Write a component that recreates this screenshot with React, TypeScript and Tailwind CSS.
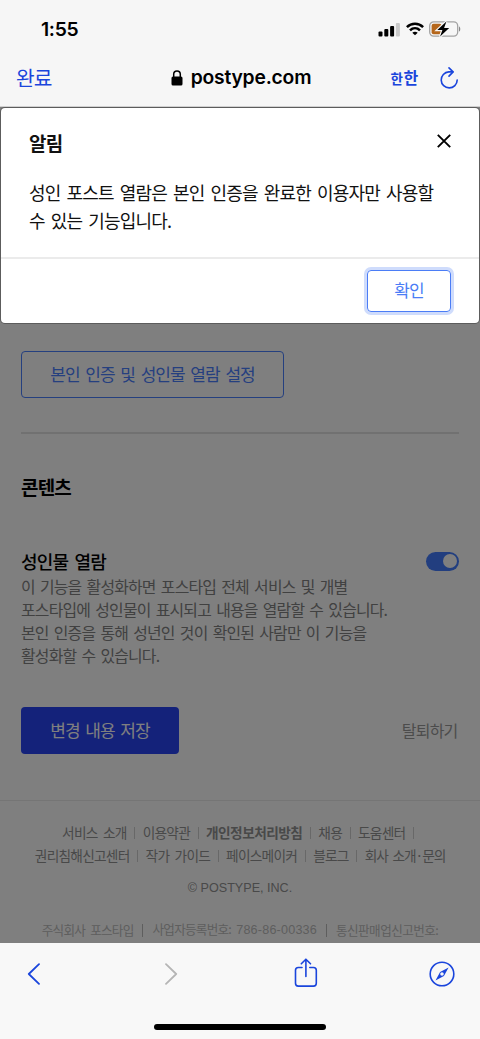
const footerLinks = [
  [
    { label: '서비스 소개' },
    { label: '이용약관' },
    { label: '개인정보처리방침', className: 'font-bold tracking-[-0.55px]' },
    { label: '채용' },
    { label: '도움센터', last: true },
  ],
  [
    { label: '권리침해신고센터' },
    { label: '작가 가이드' },
    { label: '페이스메이커' },
    { label: '블로그' },
    { label: '회사 소개·문의', className: 'tracking-[-1.1px]' },
  ],
];

function StatusBar() {
  return (
    <div className="flex h-[48px] items-end justify-between pr-[19px] pb-[9px] pl-[41px]">
      <span className="font-['Inter'] text-[19.3px] leading-[20px] font-semibold tracking-[-0.3px]">
        1:55
      </span>
      <div className="flex items-center gap-[5px] pb-[2px]">
        <svg width="23" height="15" viewBox="0 0 23 15">
          <rect x="0.5" y="9.5" width="4" height="5" rx="1" />
          <rect x="6.3" y="7" width="4" height="7.5" rx="1" />
          <rect x="12.1" y="4" width="4" height="10.5" rx="1" />
          <rect x="17.9" y="1" width="4" height="13.5" rx="1" fill="#c9c9c9" />
        </svg>
        <svg width="18" height="14" viewBox="0 0 18 14" fill="none" stroke="#000" strokeWidth="2.5">
          <path d="M.9 5.2C5.5.7 12.5.7 17.1 5.2" />
          <path d="M4 8.4c2.9-2.8 7.1-2.8 10 0" />
          <path d="M9 13.2 6.3 10.7c1.5-1.3 3.9-1.3 5.4 0Z" fill="#000" stroke="none" />
        </svg>
        <svg width="32" height="16" viewBox="0 0 32 16">
          <rect x="0.7" y="0.9" width="28" height="14.2" rx="4" fill="none" stroke="#a2a2a2" strokeWidth="1.3" />
          <path d="M30 5.4c1.7.6 1.7 4.6 0 5.2Z" fill="#888" />
          <rect x="2.6" y="2.8" width="10" height="10.4" rx="2" fill="#b5661b" />
          <path
            d="M17.4.6 8.3 9h5.1l-2.3 6.6L20.2 7h-5.1Z"
            stroke="#f6f6f6"
            strokeWidth="2.4"
            paintOrder="stroke"
          />
        </svg>
      </div>
    </div>
  );
}

function AddressBar() {
  return (
    <div className="grid h-[58px] grid-cols-[100px_1fr_100px] items-center pt-px">
      <button className="pb-[2px] pl-[16px] text-left text-[20.3px] leading-[28px] text-[#1a45dc]">
        완료
      </button>
      <div className="flex items-center justify-center gap-[8px] pl-[2px]">
        <svg width="12" height="16" viewBox="0 0 12 16">
          <rect x="0.5" y="6.5" width="11" height="9" rx="1.5" />
          <path d="M2.7 7V4.3a3.3 3.3 0 0 1 6.6 0V7" fill="none" stroke="#000" strokeWidth="1.5" />
        </svg>
        <span className="font-['Inter'] text-[19.3px] font-semibold tracking-[-0.2px] [word-spacing:0]">
          postype.com
        </span>
      </div>
      <div className="flex items-center justify-end gap-[21.5px] pr-[21px] text-[#1a45dc]">
        <span className="flex items-baseline gap-[1.5px] pb-[2px] font-bold">
          <span className="text-[13.5px] leading-[19px]">한</span>
          <span className="text-[16px] leading-[22px]">한</span>
        </span>
        <svg width="20" height="22" viewBox="0 0 20 22" fill="none" stroke="currentColor" strokeWidth="1.6" strokeLinecap="round" strokeLinejoin="round">
          <path d="M13.7 4.9H9.8A8 8 0 1 0 18.2 13" />
          <path d="m10 .9 4.1 4-4.1 4.2" />
        </svg>
      </div>
    </div>
  );
}

function AlertDialog() {
  return (
    <div
      role="dialog"
      className="absolute top-[1px] right-[1px] left-[1px] h-[215px] rounded-[4px] bg-white text-[#111] shadow-[0_0_0_1px_#5c5c5c]"
    >
      <div className="flex h-[64px] items-start justify-between pt-[21px] pr-[28px] pl-[28px]">
        <h2 className="text-[19px] leading-[28px] font-bold">알림</h2>
        <svg className="mt-[5px]" width="14" height="14" viewBox="0 0 14 14" fill="none" stroke="#000" strokeWidth="1.9">
          <path d="m.8.8 12.4 12.4M13.2.8.8 13.2" />
        </svg>
      </div>
      <p className="h-[87px] border-b-2 border-[#ebebeb] pt-[6px] pl-[28px] text-[18px] leading-[28px] whitespace-nowrap [word-spacing:2.75px]">
        성인 포스트 열람은 본인 인증을 완료한 이용자만 사용할
        <br />수 있는 기능입니다.
      </p>
      <div className="flex justify-end pt-[11px] pr-[28px]">
        <button className="h-[42px] w-[84px] rounded-[4px] border border-[#4b7df6] pb-[2px] text-[17px] text-[#4b7df6] shadow-[0_0_0_3px_#cfdcfc]">
          확인
        </button>
      </div>
    </div>
  );
}

function Settings() {
  return (
    <section className="px-[21px] pt-[244px]">
      <button className="block h-[47px] w-[263px] rounded-[4px] border border-[#4b80ff] pb-[2px] text-[17px] tracking-[-0.95px] text-[#4b80ff] [word-spacing:2.8px]">
        본인 인증 및 성인물 열람 설정
      </button>
      <hr className="mt-[34px] border-t-2 border-[#e2e2e2]" />
      <h3 className="mt-[39px] text-[19px] leading-[28px] font-bold">콘텐츠</h3>
      <div className="mt-[47px] flex h-[26px] items-center justify-between">
        <h4 className="text-[18px] leading-[26px] font-medium">성인물 열람</h4>
        <span className="flex h-[19px] w-[33px] items-center justify-end rounded-full bg-[#447dff] p-[2.5px]">
          <span className="size-[14px] rounded-full bg-white" />
        </span>
      </div>
      <p className="pt-[0.5px] text-[15.9px] leading-[23.3px] whitespace-nowrap text-[#828282] [word-spacing:2.4px]">
        이 기능을 활성화하면 포스타입 전체 서비스 및 개별
        <br />
        포스타입에 성인물이 표시되고 내용을 열람할 수 있습니다.
        <br />
        본인 인증을 통해 성년인 것이 확인된 사람만 이 기능을
        <br />
        활성화할 수 있습니다.
      </p>
      <div className="mt-[39.5px] flex items-center justify-between">
        <button className="h-[47px] w-[158px] rounded-[4px] bg-[#2844f5] pb-[2px] text-[17px] tracking-[-0.95px] text-white [word-spacing:2.8px]">
          변경 내용 저장
        </button>
        <span className="pr-[1.5px] pb-[2px] text-[16px] text-[#999]">탈퇴하기</span>
      </div>
    </section>
  );
}

function Footer() {
  return (
    <footer className="mt-[46px] flex flex-col items-center border-t border-[#ebebeb] pt-[20px] text-[13.7px] tracking-[-0.75px] whitespace-nowrap text-[#929292]">
      {footerLinks.map((row, i) => (
        <ul key={i} className="flex h-[23px] items-center gap-[7.5px] first:mr-[4px]">
          {row.map((item, j) => (
            <li key={item.label} className="flex items-center gap-[7.5px]">
              {j > 0 && <span className="h-[12px] w-px bg-[#d0d0d0]" />}
              <span className={item.className}>{item.label}</span>
              {item.last && <span className="h-[12px] w-px bg-[#d0d0d0]" />}
            </li>
          ))}
        </ul>
      ))}
      <p className="mt-[10px] font-['Liberation_Sans'] text-[12.6px] leading-[22px] tracking-normal [word-spacing:0]">
        © POSTYPE, INC.
      </p>
      <div className="mt-[19px] flex h-[24px] items-center gap-[9px] text-[12.6px] tracking-[-0.75px] text-[#bcbcbc]">
        <span>주식회사 포스타입</span>
        <span className="h-[13px] w-px bg-[#bcbcbc]" />
        <span>
          사업자등록번호:{' '}
          <span className="font-['Liberation_Sans'] tracking-[0.2px]">786-86-00336</span>
        </span>
        <span className="h-[13px] w-px bg-[#bcbcbc]" />
        <span className="tracking-[-0.55px]">통신판매업신고번호:</span>
      </div>
    </footer>
  );
}

function Toolbar() {
  return (
    <nav className="flex h-[96px] flex-col items-center justify-between bg-[#f8f8f8] pb-[9px]">
      <div className="flex h-[62px] w-full items-center justify-between pr-[25px] pl-[27px] text-[#1a45dc]">
        <svg width="14" height="22" viewBox="0 0 14 22" fill="none" stroke="currentColor" strokeWidth="1.8" strokeLinecap="round" strokeLinejoin="round">
          <path d="M12 1.2 1.8 11 12 20.8" />
        </svg>
        <svg className="ml-[6px]" width="14" height="22" viewBox="0 0 14 22" fill="none" stroke="#b5b5b5" strokeWidth="1.8" strokeLinecap="round" strokeLinejoin="round">
          <path d="M2 1.2 12.2 11 2 20.8" />
        </svg>
        <svg className="mb-[2px]" width="24" height="30" viewBox="0 0 24 30" fill="none" stroke="currentColor" strokeWidth="1.6" strokeLinecap="round" strokeLinejoin="round">
          <path d="M8 9.5H4.3a2.8 2.8 0 0 0-2.8 2.8v13a2.8 2.8 0 0 0 2.8 2.8h15.2a2.8 2.8 0 0 0 2.8-2.8v-13a2.8 2.8 0 0 0-2.8-2.8h-3.7" />
          <path d="M11.9 18.5V1.5M7.3 5.8l4.6-4.6 4.6 4.6" />
        </svg>
        <svg className="ml-[-6px]" width="26" height="26" viewBox="0 0 26 26" fill="none" stroke="currentColor" strokeWidth="1.6">
          <circle cx="13" cy="13" r="11.8" />
          <path
            d="M19.6 6.5 14.9 15 6.5 19.5 11.1 11Zm-6.6 4.7a1.8 1.8 0 1 0 0 3.6 1.8 1.8 0 0 0 0-3.6Z"
            fill="currentColor"
            fillRule="evenodd"
            stroke="none"
          />
        </svg>
      </div>
      <div className="h-[6px] w-[172px] rounded-full bg-black" />
    </nav>
  );
}

export default function App() {
  return (
    <div className="flex h-[1039px] w-[480px] flex-col overflow-hidden bg-[#f6f6f6] font-['Noto_Sans_CJK_KR',sans-serif] tracking-[-0.8px] text-black [word-spacing:3px]">
      <header className="h-[107px] border-b border-[#d0d0d0] bg-[#f6f6f6]">
        <StatusBar />
        <AddressBar />
      </header>
      <main className="relative h-[836px] overflow-hidden bg-white">
        <Settings />
        <Footer />
        <div className="absolute inset-0 bg-black/50" />
        <AlertDialog />
      </main>
      <Toolbar />
    </div>
  );
}
